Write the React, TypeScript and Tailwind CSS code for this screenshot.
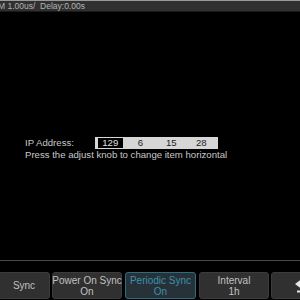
export default function App() {
  const font = { fontFamily: '"Liberation Sans", Arial, sans-serif' }
  return (
    <div className="w-[300px] h-[300px] bg-black flex flex-col overflow-hidden" style={font}>
      {/* top status bar */}
      <div className="h-[12px] bg-[#303030] border-t border-[#9a9a9a] border-b border-b-[#1a1a1a] flex items-center">
        <span className="text-[8.5px] leading-none text-[#b4b4b4] whitespace-nowrap -ml-[2px]">M 1.00us/&nbsp; Delay:0.00s</span>
      </div>

      {/* screen */}
      <div className="flex-1 flex flex-col pl-[25px] pt-[124px]">
        <div className="flex items-center h-[13px]">
          <span className="text-[9.6px] leading-none text-[#c8c8c8] w-[70px]">IP Address:</span>
          <div className="flex items-center h-[12px] w-[123px] bg-[#d6d6d6] text-[9.6px] leading-none text-[#222]">
            <span className="ml-[3px] h-[10px] w-[25px] bg-black text-[#e0e0e0] flex items-center justify-center">129</span>
            <span className="w-[36px] text-center">6</span>
            <span className="w-[27px] text-center">15</span>
            <span className="w-[34px] text-center">28</span>
          </div>
        </div>
        <p className="text-[9.6px] leading-[12px] text-[#c8c8c8]">Press the adjust knob to change item horizontal</p>
      </div>

      {/* divider */}
      <div className="h-px bg-[#4a4a4a] mb-[11px]" />

      {/* softkeys */}
      <div className="h-[27px] flex gap-[2px] text-[10px] leading-[11px] whitespace-nowrap mb-[1px]">
        <div className="w-[52px] shrink-0 -ml-[2px] rounded-[3px] bg-[#303030] border border-[#3c3c3c] text-[#c0c0c0] flex items-center justify-center">Sync</div>
        <div className="w-[70px] shrink-0 rounded-[3px] bg-[#303030] border border-[#3c3c3c] text-[#c0c0c0] flex flex-col items-center justify-center">
          <span>Power On Sync</span>
          <span>On</span>
        </div>
        <div className="w-[71px] shrink-0 ml-[1px] rounded-[3px] bg-[#263238] border border-[#2d6c80] text-[#3f8fae] flex flex-col items-center justify-center">
          <span>Periodic Sync</span>
          <span>On</span>
        </div>
        <div className="w-[70px] shrink-0 ml-[1px] rounded-[3px] bg-[#303030] border border-[#3c3c3c] text-[#c0c0c0] flex flex-col items-center justify-center">
          <span>Interval</span>
          <span>1h</span>
        </div>
        <div className="w-[62px] shrink-0 rounded-[3px] bg-[#303030] border border-[#3c3c3c] flex items-center justify-center">
          <svg width="16" height="16" viewBox="0 0 16 16">
            <path d="M1 6 L7 1.5 L7 4.5 L15 4.5 L15 7.5 L7 7.5 L7 10.5 Z" fill="#e6e6e6" />
            <path d="M3 13.5 L15 13.5" stroke="#e6e6e6" strokeWidth="2" />
          </svg>
        </div>
      </div>
    </div>
  )
}
